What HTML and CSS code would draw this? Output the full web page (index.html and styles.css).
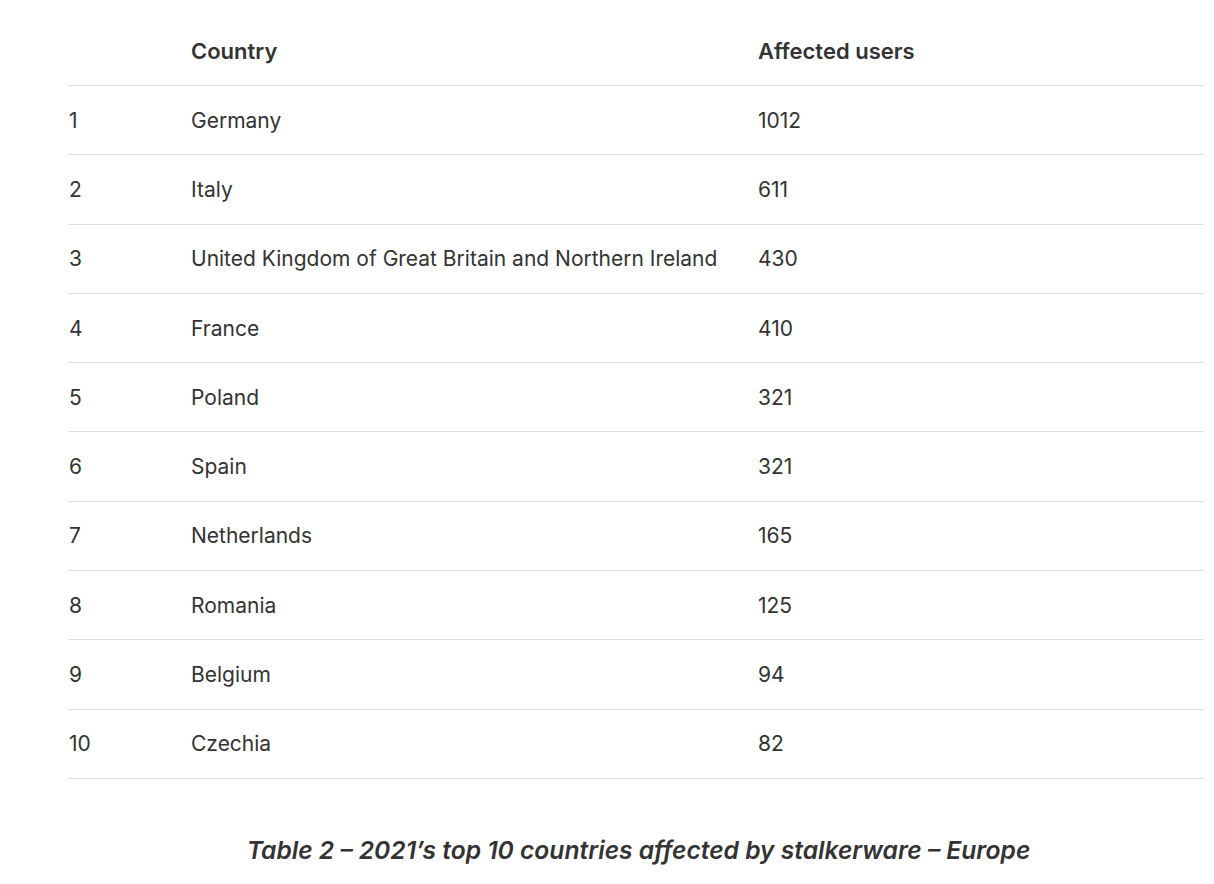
FILE: index.html
```html
<!DOCTYPE html>
<html>
<head>
<meta charset="utf-8">
<link rel="stylesheet" href="styles.css">
</head>
<body>
<div class="wrap">
  <table class="tbl">
    <thead>
      <tr><th class="c1"></th><th class="c2">Country</th><th class="c3">Affected users</th></tr>
    </thead>
    <tbody>
      <tr><td>1</td><td>Germany</td><td>1012</td></tr>
      <tr><td>2</td><td>Italy</td><td>611</td></tr>
      <tr><td>3</td><td>United Kingdom of Great Britain and Northern Ireland</td><td>430</td></tr>
      <tr><td>4</td><td>France</td><td>410</td></tr>
      <tr><td>5</td><td>Poland</td><td>321</td></tr>
      <tr><td>6</td><td>Spain</td><td>321</td></tr>
      <tr><td>7</td><td>Netherlands</td><td>165</td></tr>
      <tr><td>8</td><td>Romania</td><td>125</td></tr>
      <tr><td>9</td><td>Belgium</td><td>94</td></tr>
      <tr><td>10</td><td>Czechia</td><td>82</td></tr>
    </tbody>
  </table>
  <p class="caption">Table 2 – 2021’s top 10 countries affected by stalkerware – Europe</p>
</div>
</body>
</html>
```
FILE: styles.css
```css
html, body { margin: 0; padding: 0; background: #fff; }
body { font-family: Inter, "Noto Sans", sans-serif; color: #333; }
.wrap { padding: 16px 6px 0 69px; }
.tbl { width: 1134px; border-collapse: collapse; table-layout: fixed; }
.tbl th, .tbl td { text-align: left; padding: 0; }
.tbl th { font-size: 22px; font-weight: 600; height: 69px; border-bottom: 1px solid #ddd; vertical-align: middle; }
.tbl td { font-size: 21px; height: 68.3px; border-bottom: 1px solid #ddd; vertical-align: middle; font-weight: 400; }
.c1 { width: 122px; }
.c2 { width: 567px; }
.caption { margin: 56px 0 0 0; text-align: center; font-size: 24.6px; font-style: italic; font-weight: 600; }
```
